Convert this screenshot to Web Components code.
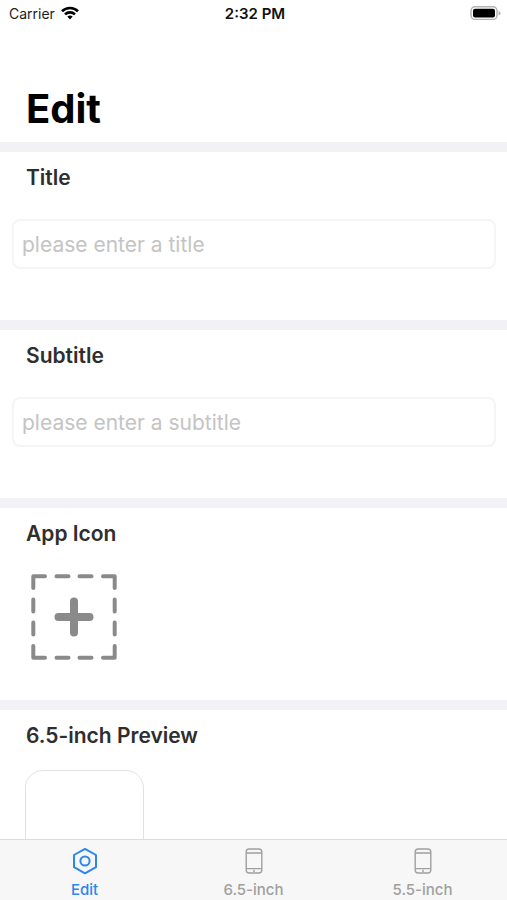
<!DOCTYPE html>
<html lang="en">
<head>
<meta charset="utf-8">
<meta name="viewport" content="width=device-width, initial-scale=1">
<title>Edit</title>
<style>
  body { margin: 0; background: #fff; color: #000; font-family: Inter, "Liberation Sans", sans-serif; }
</style>
</head>
<body>
<edit-screen></edit-screen>
<script>
const define = (name, html, setup) => {
  const template = document.createElement('template');
  template.innerHTML = html;
  customElements.define(name, class extends HTMLElement {
    connectedCallback() {
      if (this.shadowRoot) return;
      const root = this.attachShadow({ mode: 'open' });
      root.append(template.content.cloneNode(true));
      if (setup) setup(this, root);
    }
  });
};

define('status-bar', `
  <style>
    :host { display: grid; grid-template-columns: 1fr auto 1fr; align-items: center; height: 26px; padding: 0 6px 0 9px; font-size: 14px; color: #1c1c1c; flex: none; box-sizing: border-box; }
    .carrier { display: flex; align-items: center; gap: 6px; }
    .time { font-size: 15px; font-weight: 600; color: #111; }
    svg { display: block; }
    .battery { justify-self: end; }
  </style>
  <div class="carrier"><span>Carrier</span>
    <svg width="18" height="14" viewBox="0 0 18 14" fill="none" stroke="#000" stroke-width="2.6" aria-label="Wi-Fi">
      <path d="M1 5.2C5.4.9 12.6.9 17 5.2"/><path d="M4 8.4C6.8 5.7 11.2 5.7 14 8.4"/><path d="M6.3 10.6Q9 8.2 11.7 10.6L9 13.6Z" fill="#000" stroke="none"/>
    </svg>
  </div>
  <span class="time">2:32 PM</span>
  <svg class="battery" width="31" height="14" viewBox="0 0 31 14" aria-label="Battery full">
    <rect x="1" y=".8" width="26" height="12.6" rx="4" fill="#fff" stroke="#b4b4b4" stroke-width="1.5"/>
    <rect x="3" y="2.8" width="22" height="8.6" rx="2" fill="#000"/>
    <path d="M28.5 5v4.4Q30.6 8.8 30.6 7.2T28.5 5Z" fill="#b4b4b4"/>
  </svg>`);

define('page-heading', `
  <style>
    :host { display: block; padding: 62px 26px 12px; }
    h1 { margin: 0; font-size: 40px; line-height: 42px; font-weight: 700; }
  </style>
  <h1><slot></slot></h1>`);

define('form-section', `
  <style>
    :host { display: block; border-top: 10px solid #f2f2f6; padding-bottom: 51px; }
    h2 { margin: 0; padding: 12px 26px 0; font-size: 21px; line-height: 28px; font-weight: 600; color: #2e2e2e; }
  </style>
  <h2><slot name="heading"></slot></h2>
  <slot></slot>`);

define('text-field', `
  <style>
    :host { display: block; padding: 27px 11px 0 12px; }
    input { display: block; box-sizing: border-box; width: 100%; height: 50px; padding: 0 8px; border: 2px solid #f5f5f5; border-radius: 8px; background: #fff; font: inherit; font-size: 21px; color: #2e2e2e; outline: none; }
    input::placeholder { color: #c4c4c4; opacity: 1; }
    input:focus { border-color: #c4c4c4; }
  </style>
  <input type="text">`, (host, root) => {
    const input = root.querySelector('input');
    input.placeholder = host.getAttribute('placeholder');
    input.setAttribute('aria-label', host.getAttribute('label'));
  });

define('icon-picker', `
  <style>
    :host { display: block; padding: 25px 30px 0; margin-bottom: -12px; }
    button { display: block; padding: 0; border: 0; background: none; cursor: pointer; }
    svg { display: block; }
  </style>
  <button type="button" aria-label="Add app icon">
    <svg width="88" height="88" viewBox="0 0 88 88" fill="none" stroke="#8a8a8a" stroke-width="4" stroke-linecap="round" stroke-linejoin="round">
      <path d="M3.3 15V3.3H15M26.5 3.3H38.5M49.5 3.3H61.5M73 3.3H84.7V15M84.7 26.5V38.5M84.7 49.5V61.5M84.7 73V84.7H73M61.5 84.7H49.5M38.5 84.7H26.5M15 84.7H3.3V73M3.3 61.5V49.5M3.3 38.5V26.5"/>
      <path d="M44 28.5V59.5M28.5 44H59.5" stroke-width="8"/>
    </svg>
  </button>`);

define('preview-card', `
  <style>
    :host { display: block; margin: 20px 25px 0; width: 119px; height: 256px; box-sizing: border-box; border: 1px solid #e2e2e2; border-radius: 18px; background: #fff; }
  </style>`);

define('tab-item', `
  <style>
    :host { display: block; flex: 1; }
    button { display: flex; flex-direction: column; align-items: center; gap: 5px; width: 100%; padding: 7px 0 0; border: 0; background: none; font: inherit; font-size: 15px; font-weight: 500; line-height: 20px; color: #a0a0a0; cursor: pointer; }
    button[aria-selected="true"] { color: #2b87ec; }
  </style>
  <button type="button" role="tab"><slot name="icon"></slot><span><slot></slot></span></button>`, (host, root) => {
    root.querySelector('button').setAttribute('aria-selected', host.hasAttribute('selected'));
  });

define('phone-icon', `
  <style>:host, svg { display: block; }</style>
  <svg width="28" height="28" viewBox="0 0 28 28" fill="none" stroke="#a0a0a0" stroke-width="1.4">
    <rect x="6.2" y="2" width="15.6" height="24" rx="3"/><path d="M6.2 6H21.8M6.2 21.6H21.8"/><path d="M14 22.8V25"/>
  </svg>`);

define('hexagon-icon', `
  <style>:host, svg { display: block; }</style>
  <svg width="28" height="28" viewBox="0 0 28 28" fill="none" stroke="#2b87ec" stroke-width="2" stroke-linejoin="round">
    <path d="M14 1.9 25 8V20.2L14 26.3 3 20.2V8Z"/><circle cx="14" cy="14" r="4.6"/>
  </svg>`);

define('tab-bar', `
  <style>
    :host { display: flex; flex: none; height: 60px; border-top: 1px solid #dcdcdc; background: #f7f7f7; }
  </style>
  <slot></slot>`, host => host.setAttribute('role', 'tablist'));

define('edit-screen', `
  <style>
    :host { display: flex; flex-direction: column; height: 100vh; }
    main { flex: 1; min-height: 0; overflow-y: auto; scrollbar-width: none; }
  </style>
  <status-bar></status-bar>
  <main>
    <page-heading>Edit</page-heading>
    <form-section><span slot="heading">Title</span><text-field label="Title" placeholder="please enter a title"></text-field></form-section>
    <form-section><span slot="heading">Subtitle</span><text-field label="Subtitle" placeholder="please enter a subtitle"></text-field></form-section>
    <form-section><span slot="heading">App Icon</span><icon-picker></icon-picker></form-section>
    <form-section><span slot="heading">6.5-inch Preview</span><preview-card></preview-card></form-section>
  </main>
  <tab-bar>
    <tab-item selected><hexagon-icon slot="icon"></hexagon-icon>Edit</tab-item>
    <tab-item><phone-icon slot="icon"></phone-icon>6.5-inch</tab-item>
    <tab-item><phone-icon slot="icon"></phone-icon>5.5-inch</tab-item>
  </tab-bar>`);
</script>
</body>
</html>
